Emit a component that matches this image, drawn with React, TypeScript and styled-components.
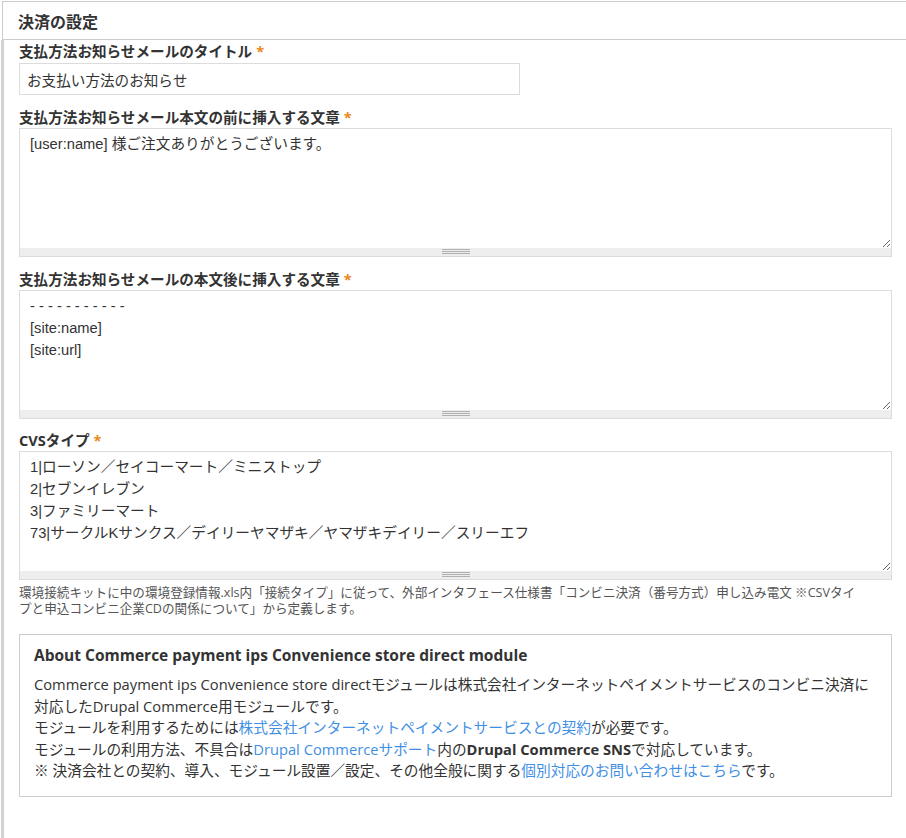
import React from 'react';
import styled, { createGlobalStyle } from 'styled-components';

const GlobalStyle = createGlobalStyle`
  html, body {
    margin: 0;
    padding: 0;
    background: #fff;
  }
  body {
    font-family: "Open Sans", "Noto Sans CJK JP", sans-serif;
    color: #333;
  }
  * {
    box-sizing: border-box;
  }
`;

const jpSans = `"Open Sans", "Noto Sans CJK JP", sans-serif`;
const fieldFont = `"Liberation Sans", "Noto Sans CJK JP", sans-serif`;

const Page = styled.div`
  display: flex;
  flex-direction: column;
  min-height: 100vh;
  padding-top: 1px;
`;

const SectionHeader = styled.div`
  margin-left: 2px;
  height: 39px;
  display: flex;
  align-items: center;
  padding-left: 15px;
  border-top: 1px solid #cccccc;
  border-left: 1px solid #cccccc;
  border-bottom: 1px solid #cccccc;
  font-family: ${jpSans};
  font-size: 16px;
  font-weight: 700;
  color: #333;
`;

const SectionBody = styled.div`
  flex: 1;
  margin-left: 1px;
  border-left: 3px solid #d2d2d2;
  padding: 0 14px 0 15px;
`;

const FormItem = styled.div<{ $gap?: number }>`
  margin-top: ${(p) => p.$gap ?? 11}px;
`;

const Label = styled.label`
  display: block;
  font-family: ${jpSans};
  font-size: 14.6px;
  font-weight: 700;
  line-height: 20px;
  color: #333;
  margin-bottom: 1px;
`;

const Required = styled.span`
  color: #e8891c;
  margin-left: 4px;
`;

const TextInput = styled.input`
  display: block;
  width: 501px;
  height: 32px;
  margin-top: 2px;
  padding: 0 7px;
  border: 1px solid #dcdcdc;
  font-family: ${fieldFont};
  font-size: 14.6px;
  color: #333;
  background: #fff;
  outline: none;
`;

const TextareaWrap = styled.div`
  display: flex;
  flex-direction: column;
`;

const TextArea = styled.textarea`
  display: block;
  width: 100%;
  height: 120px;
  margin: 0;
  padding: 4px 10px;
  border: 1px solid #dcdcdc;
  border-bottom: none;
  font-family: ${fieldFont};
  font-size: 14.7px;
  line-height: 22px;
  color: #333;
  resize: vertical;
  outline: none;
`;

const Grippie = styled.div`
  height: 9px;
  background: #eeeeee;
  border: 1px solid #dcdcdc;
  border-top: none;
  display: flex;
  justify-content: center;
  align-items: center;
`;

const Description = styled.div`
  margin-top: 5px;
  font-family: ${jpSans};
  font-size: 12.6px;
  line-height: 16px;
  color: #555;
`;

const InfoBox = styled.div`
  margin-top: 17px;
  border: 1px solid #cccccc;
  padding: 9px 14px 14px;
`;

const InfoTitle = styled.h3`
  margin: 0;
  font-family: ${jpSans};
  font-size: 15.5px;
  font-weight: 700;
  line-height: 22px;
  color: #333;
`;

const InfoText = styled.p`
  margin: 8px 0 0;
  font-family: ${jpSans};
  font-size: 14.7px;
  line-height: 21.5px;
  color: #333;
  white-space: nowrap;
`;

const Link = styled.a`
  color: #3f8fe4;
  text-decoration: none;
`;

const GripLines = () => (
  <svg width="28" height="6" viewBox="0 0 28 6">
    <line x1="0" y1="0.5" x2="28" y2="0.5" stroke="#b0b0b0" strokeWidth="1" />
    <line x1="0" y1="2.5" x2="28" y2="2.5" stroke="#b0b0b0" strokeWidth="1" />
    <line x1="0" y1="4.5" x2="28" y2="4.5" stroke="#b0b0b0" strokeWidth="1" />
  </svg>
);

const ResizableText: React.FC<{ value: string }> = ({ value }) => (
  <TextareaWrap>
    <TextArea defaultValue={value} />
    <Grippie>
      <GripLines />
    </Grippie>
  </TextareaWrap>
);

const App: React.FC = () => {
  return (
    <>
      <GlobalStyle />
      <Page>
        <SectionHeader>決済の設定</SectionHeader>
        <SectionBody>
          <FormItem $gap={1}>
            <Label>
              支払方法お知らせメールのタイトル<Required>*</Required>
            </Label>
            <TextInput defaultValue="お支払い方法のお知らせ" />
          </FormItem>

          <FormItem $gap={12}>
            <Label>
              支払方法お知らせメール本文の前に挿入する文章<Required>*</Required>
            </Label>
            <ResizableText value="[user:name] 様ご注文ありがとうございます。" />
          </FormItem>

          <FormItem $gap={12}>
            <Label>
              支払方法お知らせメールの本文後に挿入する文章<Required>*</Required>
            </Label>
            <ResizableText value={'- - - - - - - - - - -\n[site:name]\n[site:url]'} />
          </FormItem>

          <FormItem $gap={11}>
            <Label>
              CVSタイプ<Required>*</Required>
            </Label>
            <ResizableText
              value={
                '1|ローソン／セイコーマート／ミニストップ\n2|セブンイレブン\n3|ファミリーマート\n73|サークルKサンクス／デイリーヤマザキ／ヤマザキデイリー／スリーエフ'
              }
            />
            <Description>
              環境接続キットに中の環境登録情報.xls内「接続タイプ」に従って、外部インタフェース仕様書「コンビニ決済（番号方式）申し込み電文 ※CSVタイ
              <br />
              プと申込コンビニ企業CDの関係について」から定義します。
            </Description>
          </FormItem>

          <InfoBox>
            <InfoTitle>About Commerce payment ips Convenience store direct module</InfoTitle>
            <InfoText>
              Commerce payment ips Convenience store directモジュールは株式会社インターネットペイメントサービスのコンビニ決済に
              <br />
              対応したDrupal Commerce用モジュールです。
              <br />
              モジュールを利用するためには<Link href="#">株式会社インターネットペイメントサービスとの契約</Link>が必要です。
              <br />
              モジュールの利用方法、不具合は<Link href="#">Drupal Commerceサポート</Link>内の
              <strong>Drupal Commerce SNS</strong>で対応しています。
              <br />
              ※ 決済会社との契約、導入、モジュール設置／設定、その他全般に関する
              <Link href="#">個別対応のお問い合わせはこちら</Link>です。
            </InfoText>
          </InfoBox>
        </SectionBody>
      </Page>
    </>
  );
};

export default App;
